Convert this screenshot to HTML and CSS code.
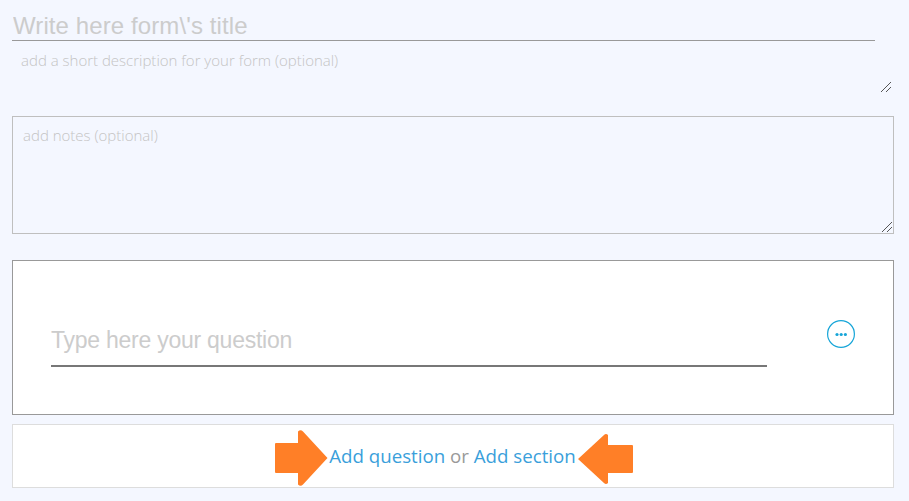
FILE: index.html
```html
<!DOCTYPE html>
<html lang="en">
<head>
    <meta charset="UTF-8">
    <meta name="viewport" content="width=device-width, initial-scale=1.0">
    <title>Form builder</title>
    <link rel="stylesheet" href="styles.css">
</head>
<body>
    <form class="form-builder">
        <input type="text" class="form-title" placeholder="Write here form\'s title">
        <div class="resizable description-field">
            <textarea class="form-description" placeholder="add a short description for your form (optional)"></textarea>
            <svg class="grip" width="10" height="10" viewBox="0 0 10 10">
                <path d="M0 10L10 0M5 10L10 5" stroke="#555" stroke-width="1"/>
            </svg>
        </div>
        <div class="resizable notes-field">
            <textarea class="form-notes" placeholder="add notes (optional)"></textarea>
            <svg class="grip" width="10" height="10" viewBox="0 0 10 10">
                <path d="M0 10L10 0M5 10L10 5" stroke="#555" stroke-width="1"/>
            </svg>
        </div>

        <div class="question-card">
            <input type="text" class="question-input" placeholder="Type here your question">
            <button type="button" class="options-button" aria-label="Options">
                <svg width="28" height="28" viewBox="0 0 28 28">
                    <circle cx="14" cy="14" r="13.4" fill="none" stroke="#16a5d8" stroke-width="1.2"/>
                    <circle cx="10" cy="14.5" r="1.6" fill="#16a5d8"/>
                    <circle cx="14.2" cy="14.5" r="1.6" fill="#16a5d8"/>
                    <circle cx="18.4" cy="14.5" r="1.6" fill="#16a5d8"/>
                </svg>
            </button>
        </div>

        <div class="add-bar">
            <svg class="arrow arrow-right" width="53" height="56" viewBox="0 0 53 56">
                <path d="M1 13H23V1.5Q25.5 -1 28 1.5L52.500 28L28 54.5Q25.5 57 23 54.5V43H1Q0 43 0 42V14Q0 13 1 13Z" fill="#ff7f27"/>
            </svg>
            <p class="add-links"><a href="#">Add question</a> or <a href="#">Add section</a></p>
            <svg class="arrow arrow-left" width="55" height="50" viewBox="0 0 55 50">
                <path d="M54 11H30V1Q28 -1 26 1L0 25L26 49Q28 51 30 49V39H54Q55 39 55 38V12Q55 11 54 11Z" fill="#ff7f27"/>
            </svg>
        </div>
    </form>
</body>
</html>
```

FILE: styles.css
```css
body {
    margin: 0;
    background-color: #f4f7ff;
    font-family: "Open Sans", sans-serif;
    color: #999;
}

input, textarea {
    display: block;
    box-sizing: border-box;
    margin: 0;
    border: none;
    border-radius: 0;
    outline: none;
    background: transparent;
}

::placeholder {
    color: #ccc;
    opacity: 1;
}

.form-builder {
    width: 882px;
    padding: 10px 0 0 12px;
}

.form-title {
    width: 863px;
    height: 31px;
    padding: 2px 0 0 1px;
    border-bottom: 1px solid #999;
    font-family: "Liberation Sans", Arial, sans-serif;
    font-size: 24px;
    letter-spacing: 0.1px;
}

.resizable {
    position: relative;
}

.form-description, .form-notes {
    width: 100%;
    font-family: "Open Sans", sans-serif;
    font-size: 15px;
    font-weight: 300;
    line-height: 20px;
    resize: none;
}

.form-description::placeholder, .form-notes::placeholder {
    color: #c4c4c4;
}

.form-description {
    height: 53px;
    padding: 9px;
}

.notes-field {
    margin-top: 22px;
}

.form-notes {
    height: 118px;
    padding: 8px 10px;
    border: 1px solid #bfbfbf;
}

.grip {
    position: absolute;
    right: 3px;
    bottom: 2px;
}

.notes-field .grip {
    right: 2px;
}

.question-card {
    display: flex;
    justify-content: space-between;
    box-sizing: border-box;
    height: 155px;
    margin-top: 26px;
    padding: 59px 38px 0;
    border: 1px solid #999;
    background-color: #fff;
}

.question-input {
    width: 716px;
    height: 47px;
    padding: 0 0 5px;
    border-bottom: 2px solid #777;
    font-family: "Liberation Sans", Arial, sans-serif;
    font-size: 23px;
    letter-spacing: -0.25px;
}

.options-button {
    width: 28px;
    height: 28px;
    padding: 0;
    border: none;
    background: none;
    cursor: pointer;
}

.options-button svg {
    display: block;
}

.add-bar {
    display: flex;
    justify-content: center;
    align-items: center;
    box-sizing: border-box;
    height: 64px;
    margin-top: 9px;
    padding-left: 2px;
    border: 1px solid #ddd;
    background-color: #fff;
}

.add-links {
    margin: -2px 2px 0 1px;
    font-size: 18.7px;
    white-space: nowrap;
}

.add-links a {
    color: #3a9fdb;
    text-decoration: none;
}

.arrow {
    flex: none;
}

.arrow-right {
    margin-top: 4px;
}

.arrow-left {
    margin-top: 6px;
}
```
